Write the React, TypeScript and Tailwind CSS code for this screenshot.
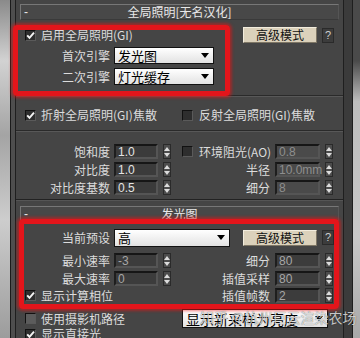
import React from 'react'

function Check({ on, mid }: { on?: boolean; mid?: boolean }) {
  return (
    <span
      className={`flex h-[11px] w-[11px] shrink-0 items-center justify-center border border-t-[#111] border-l-[#111] border-b-[#5a5a5a] border-r-[#5a5a5a] ${
        mid ? 'bg-[#5c5c5c]' : 'bg-[#2e2e2e]'
      }`}
    >
      {on && (
        <svg width="9" height="9" viewBox="0 0 9 9">
          <path d="M1.2 4.4 L3.5 6.9 L8 1.6" fill="none" stroke="#f4f4f4" strokeWidth="1.9" />
        </svg>
      )}
    </span>
  )
}

function Spin() {
  return (
    <span className="flex h-[15px] w-[8px] shrink-0 flex-col items-center justify-center gap-[2px] border border-[#2a2a2a] bg-[#4c4c4c]">
      <svg width="6" height="4" viewBox="0 0 6 4">
        <path d="M3 0 L6 4 L0 4 Z" fill="#dcdcdc" />
      </svg>
      <svg width="6" height="4" viewBox="0 0 6 4">
        <path d="M0 0 L6 0 L3 4 Z" fill="#dcdcdc" />
      </svg>
    </span>
  )
}

function Field({ value, tone = 'on', wide }: { value: string; tone?: 'on' | 'dim' | 'off'; wide?: boolean }) {
  const look =
    tone === 'off'
      ? 'bg-[#4a4a4a] text-[#8e8e8e]'
      : tone === 'dim'
        ? 'bg-[#3c3c3c] text-[#a6a6a6]'
        : 'bg-[#3b3b3b] text-[#e4e4e4]'
  return (
    <span
      className={`flex h-[15px] shrink-0 items-center border-[2px] border-t-[#161616] border-l-[#1e1e1e] border-b-[#555] border-r-[#555] pl-[2px] font-['Liberation_Sans',sans-serif] text-[12px] leading-none ${look} ${
        wide ? 'w-[45px]' : 'w-[44px]'
      }`}
    >
      {value}
    </span>
  )
}

function Drop({ text, className }: { text: string; className: string }) {
  return (
    <div
      className={`flex items-center justify-between border border-[#111] bg-[linear-gradient(#ffffff,#e2e2e2)] pl-[3px] pr-[4px] leading-none whitespace-nowrap text-black ${className}`}
    >
      <span>{text}</span>
      <svg width="8" height="5" viewBox="0 0 8 5">
        <path d="M0 0 H8 L4 5 Z" fill="#000" />
      </svg>
    </div>
  )
}

function AdvButtons() {
  return (
    <>
      <button className="flex h-[16px] w-[74px] items-center justify-center border border-t-[#f2ecdd] border-l-[#f2ecdd] border-b-[#7e7665] border-r-[#7e7665] bg-[#dbd1bb] text-[12px] leading-none text-[#111]">
        高级模式
      </button>
      <button className="ml-[5px] flex h-[15px] w-[12px] items-center justify-center border border-[#2a2a2a] bg-[#3c3c3c] font-['Liberation_Sans',sans-serif] text-[11px] leading-none text-[#cfcfcf]">
        ?
      </button>
    </>
  )
}

function Header({ title }: { title: string }) {
  return (
    <div className="mx-[4px] grid h-[16px] grid-cols-[16px_1fr_16px] items-center border border-t-[#777] border-l-[#777] border-b-[#3a3a3a] border-r-[#555] bg-[#484848] text-[12px] leading-none text-[#e8e8e8]">
      <span className="pl-[3px] font-['Liberation_Sans',sans-serif]">-</span>
      <span className="text-center">{title}</span>
      <span />
    </div>
  )
}

function Sep() {
  return <div className="h-[2px] border-t border-b border-t-[#2a2a2a] border-b-[#585858]" />
}

function Label({ text, w = 'w-[94px]' }: { text: string; w?: string }) {
  return <span className={`${w} shrink-0 whitespace-nowrap text-right text-[12px] leading-none`}>{text}</span>
}

export default function App() {
  return (
    <div className="relative flex h-[338px] w-[360px] overflow-hidden bg-[#444] font-['Noto_Sans_CJK_SC',sans-serif] text-[#dcdcdc]">
      <div className="w-[10px] shrink-0 bg-[linear-gradient(180deg,#8a8a8a,#d2d2d2_18%,#a4a4a4_40%,#cdcdcd_65%,#9c9c9c)]" />
      <div className="w-[1px] shrink-0 bg-[#1b1b1b]" />
      <div className="w-[4px] shrink-0 bg-[#4e4e4e]" />

      <main className="flex w-[329px] shrink-0 flex-col border-l border-r border-[#1f1f1f] bg-[#454545]">
        <div className="mt-[4px]">
          <Header title="全局照明[无名汉化]" />
        </div>

        <div className="mt-[7px] flex h-[17px] items-center">
          <div className="flex w-[227px] items-center pl-[9px]">
            <Check on />
            <span className="ml-[5px] text-[12px] leading-none">启用全局照明(GI)</span>
          </div>
          <AdvButtons />
        </div>

        <div className="mt-[4px] flex h-[17px] items-center">
          <Label text="首次引擎" />
          <Drop text="发光图" className="ml-[4px] h-[17px] w-[100px] text-[13px]" />
        </div>
        <div className="mt-[4px] flex h-[17px] items-center">
          <Label text="二次引擎" />
          <Drop text="灯光缓存" className="ml-[4px] h-[17px] w-[100px] text-[13px]" />
        </div>

        <div className="mt-[10px]">
          <Sep />
        </div>

        <div className="mt-[12px] flex h-[14px] items-center text-[12px] leading-none">
          <div className="flex w-[166px] items-center pl-[9px]">
            <Check on />
            <span className="ml-[5px]">折射全局照明(GI)焦散</span>
          </div>
          <Check />
          <span className="ml-[6px]">反射全局照明(GI)焦散</span>
        </div>

        <div className="mt-[9px]">
          <Sep />
        </div>

        <div className="mt-[12px] flex h-[15px] items-center">
          <div className="flex w-[166px] items-center">
            <Label text="饱和度" />
            <span className="ml-[4px]"><Field value="1.0" /></span>
            <span className="ml-[5px]"><Spin /></span>
          </div>
          <div className="flex w-[88px] shrink-0 items-center">
            <Check />
            <span className="ml-[6px] whitespace-nowrap text-[12px] leading-none">环境阻光(AO)</span>
          </div>
          <span className="ml-[5px]"><Field value="0.8" tone="off" wide /></span>
          <span className="ml-[5px]"><Spin /></span>
        </div>
        <div className="mt-[3px] flex h-[15px] items-center">
          <div className="flex w-[166px] items-center">
            <Label text="对比度" />
            <span className="ml-[4px]"><Field value="1.0" /></span>
            <span className="ml-[5px]"><Spin /></span>
          </div>
          <Label text="半径" w="w-[88px]" />
          <span className="ml-[5px]"><Field value="10.0mm" tone="off" wide /></span>
          <span className="ml-[5px]"><Spin /></span>
        </div>
        <div className="mt-[3px] flex h-[15px] items-center">
          <div className="flex w-[166px] items-center">
            <Label text="对比度基数" />
            <span className="ml-[4px]"><Field value="0.5" /></span>
            <span className="ml-[5px]"><Spin /></span>
          </div>
          <Label text="细分" w="w-[88px]" />
          <span className="ml-[5px]"><Field value="8" tone="off" wide /></span>
          <span className="ml-[5px]"><Spin /></span>
        </div>

        <div className="mt-[4px] h-[2px] border-t border-b border-t-[#222] border-b-[#555]" />

        <div className="mt-[5px]">
          <Header title="发光图" />
        </div>

        <div className="mt-[7px] flex h-[17px] items-center">
          <div className="flex w-[227px] items-center">
            <Label text="当前预设" />
            <Drop text="高" className="ml-[4px] h-[18px] w-[116px] text-[13px]" />
          </div>
          <AdvButtons />
        </div>

        <div className="mt-[7px] flex h-[15px] items-center">
          <div className="flex w-[166px] items-center">
            <Label text="最小速率" />
            <span className="ml-[4px]"><Field value="-3" tone="dim" /></span>
            <span className="ml-[5px]"><Spin /></span>
          </div>
          <Label text="细分" w="w-[88px]" />
          <span className="ml-[5px]"><Field value="80" tone="dim" wide /></span>
          <span className="ml-[5px]"><Spin /></span>
        </div>
        <div className="mt-[3px] flex h-[15px] items-center">
          <div className="flex w-[166px] items-center">
            <Label text="最大速率" />
            <span className="ml-[4px]"><Field value="0" tone="dim" /></span>
            <span className="ml-[5px]"><Spin /></span>
          </div>
          <Label text="插值采样" w="w-[88px]" />
          <span className="ml-[5px]"><Field value="80" tone="dim" wide /></span>
          <span className="ml-[5px]"><Spin /></span>
        </div>
        <div className="mt-[2px] flex h-[15px] items-center">
          <div className="flex w-[166px] items-center pl-[9px]">
            <Check on />
            <span className="ml-[5px] text-[12px] leading-none">显示计算相位</span>
          </div>
          <Label text="插值帧数" w="w-[88px]" />
          <span className="ml-[5px]"><Field value="2" tone="dim" wide /></span>
          <span className="ml-[5px]"><Spin /></span>
        </div>

        <div className="mt-[6px] flex h-[19px] items-center">
          <div className="flex w-[166px] items-center pl-[9px]">
            <Check mid />
            <span className="ml-[5px] text-[12px] leading-none">使用摄影机路径</span>
          </div>
          <Drop text="显示新采样为亮度" className="h-[19px] w-[146px] text-[14px]" />
        </div>
        <div className="flex h-[14px] items-center pl-[9px]">
          <Check on />
          <span className="ml-[5px] text-[12px] leading-none">显示直接光</span>
        </div>
      </main>

      <div className="w-[8px] shrink-0 bg-[#3b3b3b]" />
      <div className="w-[1px] shrink-0 bg-[#1e1e1e]" />
      <div className="w-[7px] shrink-0 bg-[linear-gradient(180deg,#4a4a4a,#4a4a4a_18%,#bdbdbd_30%,#c8c8c8_70%,#a8a8a8)]" />

      {/* red annotation frames */}
      <div className="pointer-events-none absolute left-[13px] top-[25px] h-[71px] w-[217px] rounded-[4px] border-[5px] border-[#e3151b] shadow-[0_0_3px_2px_rgba(230,20,20,0.55)]" />
      <div className="pointer-events-none absolute left-[19px] top-[219px] h-[90px] w-[320px] rounded-[4px] border-[5px] border-[#e3151b] shadow-[0_0_3px_2px_rgba(230,20,20,0.55)]" />

      <div className="pointer-events-none absolute left-[200px] top-[310px] whitespace-nowrap text-[14px] leading-none text-white/75 [text-shadow:0_0_1px_rgba(0,0,0,0.7)]">
        知乎 @杭州巨云渲染农场
      </div>
    </div>
  )
}
